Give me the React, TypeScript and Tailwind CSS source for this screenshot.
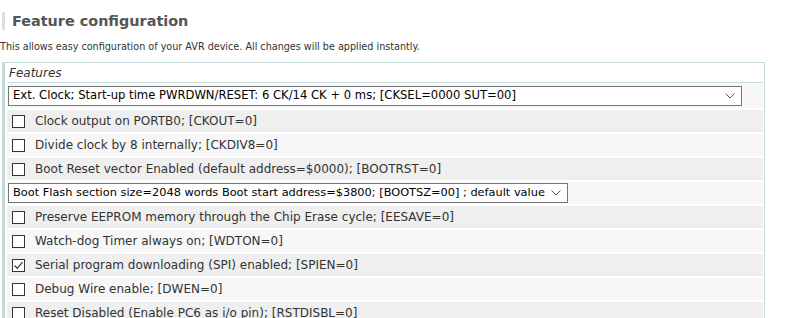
import React from "react";

const font = { fontFamily: '"DejaVu Sans", Verdana, sans-serif' };

function Check({ checked }: { checked?: boolean }) {
  return (
    <span className="w-[13px] h-[13px] border border-[#333] bg-white flex items-center justify-center shrink-0">
      {checked && (
        <svg width="11" height="11" viewBox="0 0 11 11">
          <path d="M1.5 5.5 L4.3 8.3 L9.5 2.2" fill="none" stroke="#333" strokeWidth="1.2" />
        </svg>
      )}
    </span>
  );
}

function Row({ text, checked, dark }: { text: string; checked?: boolean; dark?: boolean }) {
  return (
    <div className={`h-[22px] flex items-center pl-[5px] gap-[10px] ${dark ? "bg-[#efefef]" : "bg-[#f7f7f7]"}`}>
      <Check checked={checked} />
      <span className="text-[12px] text-[#333] whitespace-nowrap">{text}</span>
    </div>
  );
}

function Select({ text, cls }: { text: string; cls: string }) {
  return (
    <div className={`h-[20px] ${cls} border border-[#767676] bg-white flex items-center pl-[4px] pr-[6px] text-black whitespace-nowrap`}>
      <span className="flex-1 overflow-hidden">{text}</span>
      <svg width="10" height="6" viewBox="0 0 10 6" className="shrink-0 ml-1">
        <path d="M0.5 0.5 L5 5 L9.5 0.5" fill="none" stroke="#555" strokeWidth="1" />
      </svg>
    </div>
  );
}

export default function App() {
  return (
    <div className="w-[793px] h-[318px] bg-white overflow-hidden relative" style={font}>
      <div className="flex items-center pt-[12px] pl-[2px]">
        <div className="w-[3px] h-[18px] bg-[#dddddd]" />
        <h1 className="ml-[7px] text-[14.4px] font-bold text-[#555] leading-[18px]">Feature configuration</h1>
      </div>
      <p className="mt-[11px] text-[9.65px] text-[#333] leading-[12px] whitespace-nowrap">
        This allows easy configuration of your AVR device. All changes will be applied instantly.
      </p>
      <div className="ml-[2px] mt-[9px] w-[763px] border-t border-r border-[#c5d9d9] border-l-[3px] pl-[2px] pr-[1px]">
        <div className="h-[20px] flex items-center pl-[2px] border-b border-[#c5d9d9] italic text-[12px] text-[#333]">
          Features
        </div>
        <div className="flex flex-col gap-[2px] pt-[1px]">
          <div className="h-[24px] bg-[#f7f7f7] flex items-center pl-[1px]">
            <Select cls="w-[734px] text-[11.6px]" text="Ext. Clock; Start-up time PWRDWN/RESET: 6 CK/14 CK + 0 ms; [CKSEL=0000 SUT=00]" />
          </div>
          <Row dark text="Clock output on PORTB0; [CKOUT=0]" />
          <Row text="Divide clock by 8 internally; [CKDIV8=0]" />
          <Row dark text="Boot Reset vector Enabled (default address=$0000); [BOOTRST=0]" />
          <div className="h-[22px] bg-[#f7f7f7] flex items-center pl-[1px]">
            <Select cls="w-[560px] text-[11.35px]" text="Boot Flash section size=2048 words Boot start address=$3800; [BOOTSZ=00] ; default value" />
          </div>
          <Row dark text="Preserve EEPROM memory through the Chip Erase cycle; [EESAVE=0]" />
          <Row text="Watch-dog Timer always on; [WDTON=0]" />
          <Row dark checked text="Serial program downloading (SPI) enabled; [SPIEN=0]" />
          <Row text="Debug Wire enable; [DWEN=0]" />
          <Row dark text="Reset Disabled (Enable PC6 as i/o pin); [RSTDISBL=0]" />
        </div>
      </div>
    </div>
  );
}
